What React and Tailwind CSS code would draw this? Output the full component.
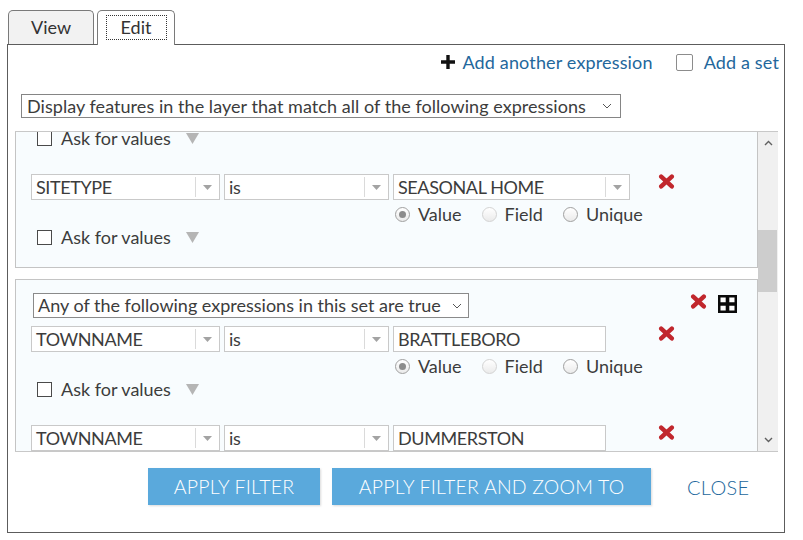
import React from "react";

function Caret() {
  return (
    <svg width="9" height="5" viewBox="0 0 9 5">
      <path d="M0 0h9L4.5 5z" fill="#a3a3a3" />
    </svg>
  );
}

function Chevron() {
  return (
    <svg width="10" height="6" viewBox="0 0 10 6">
      <path d="M1 1l4 4 4-4" fill="none" stroke="#555" strokeWidth="1" />
    </svg>
  );
}

function RedX() {
  return (
    <svg width="17" height="15" viewBox="0 0 17 15" className="shrink-0">
      <path d="M3.2 2.6L13.8 12.4M13.8 2.6L3.2 12.4" stroke="#c1272d" strokeWidth="4.4" strokeLinecap="round" />
    </svg>
  );
}

function PlusBox() {
  return (
    <svg width="19" height="18" viewBox="0 0 19 18" className="shrink-0">
      <rect x="1.25" y="1.25" width="16.5" height="15.5" fill="#fff" stroke="#0a0a0a" strokeWidth="2.5" />
      <path d="M9.5 1v16M1 9h17" stroke="#0a0a0a" strokeWidth="3.6" />
    </svg>
  );
}

function Sel({ w, text }) {
  return (
    <div className={`flex h-[26px] border border-[#c9c9c9] bg-white ${w}`}>
      <div className="flex flex-1 items-center overflow-hidden whitespace-nowrap pl-[4px] text-[18px] tracking-[-0.4px] text-[#3c3c3c]">
        {text}
      </div>
      <div className="my-[2px] w-px bg-[#dadada]" />
      <div className="flex w-[23px] items-center justify-center">
        <Caret />
      </div>
    </div>
  );
}

function Input({ text }) {
  return (
    <div className="flex h-[26px] w-[213px] items-center border border-[#c9c9c9] bg-white pl-[4px] text-[18px] tracking-[-0.4px] text-[#3c3c3c]">
      {text}
    </div>
  );
}

function Radio({ checked, label, light }) {
  return (
    <div className="flex items-center">
      <div
        className={`flex h-[15px] w-[15px] items-center justify-center rounded-full border bg-gradient-to-b from-white to-[#ebebeb] ${
          light ? "border-[#d3d3d3]" : "border-[#a0a0a0]"
        }`}
      >
        {checked && <div className="h-[7px] w-[7px] rounded-full bg-[#8c8c8c]" />}
      </div>
      <span className="ml-[8px] text-[18px] text-[#3c3c3c]">{label}</span>
    </div>
  );
}

function Expression({ field, value, input, first }) {
  return (
    <div className={first ? "" : "mt-[25px]"}>
      <div className="flex h-[26px] items-start gap-[4px] pl-[15px]">
        <Sel w="w-[189px]" text={field} />
        <Sel w="w-[165px]" text="is" />
        <div className="w-[237px]">
          {input ? <Input text={value} /> : <Sel w="w-[237px]" text={value} />}
        </div>
        <div className="ml-[24px]">
          <RedX />
        </div>
      </div>
      <div className="mt-[2px] flex h-[24px] items-center gap-[20px] pl-[379px]">
        <Radio checked label="Value" />
        <Radio light label="Field" />
        <Radio label="Unique" />
      </div>
      <div className="flex h-[22px] items-center pl-[21px]">
        <div className="h-[15px] w-[15px] border border-[#4a4a4a] bg-white" />
        <span className="ml-[9px] text-[18px] text-[#3c3c3c]">Ask for values</span>
        <svg className="ml-[15px]" width="13" height="11" viewBox="0 0 13 11">
          <path d="M0 0h13L6.5 11z" fill="#b5b5b5" />
        </svg>
      </div>
    </div>
  );
}

function SetBox({ children, extra }) {
  return (
    <div className={`border border-[#c4c4c4] bg-[#f8fcfe] pb-[19px] ${extra}`}>
      <div className="mt-[13px] flex items-start pl-[17px]">
        <div className="flex h-[25px] w-[436px] items-center justify-between border border-[#8a8a8a] bg-white pl-[4px] pr-[6px] text-[18px] text-[#3c3c3c]">
          <span>Any of the following expressions in this set are true</span>
          <Chevron />
        </div>
        <div className="ml-[221px] mt-px">
          <RedX />
        </div>
        <div className="ml-[11px] mt-[2px]">
          <PlusBox />
        </div>
      </div>
      <div className="mt-[8px]">{children}</div>
    </div>
  );
}

export default function App() {
  return (
    <div className="h-[540px] w-[803px] overflow-hidden bg-white pl-[7px] pt-[10px] text-[#3c3c3c] [font-family:Lato,'Open_Sans',sans-serif]">
      <div className="ml-px flex items-end">
        <div className="flex h-[34px] w-[86px] items-center justify-center rounded-t-[5px] border border-b-0 border-[#7a7a7a] bg-[#f2f2f2] text-[18px] text-[#333]">
          View
        </div>
        <div className="relative z-10 -mb-px ml-[3px] flex h-[35px] w-[78px] items-center justify-center rounded-t-[5px] border border-b-0 border-[#7a7a7a] bg-white">
          <div className="mb-[2px] flex h-[25px] w-[61px] items-center justify-center border border-dotted border-[#333] text-[18px] text-[#333]">
            Edit
          </div>
        </div>
      </div>
      <div className="flex h-[489px] w-[778px] flex-col border border-[#5c5c5c]">
        <div className="mt-[5px] flex h-[24px] items-center justify-end pr-[5px] text-[18px] tracking-[0.15px] text-[#23679c]">
          <svg width="14" height="14" viewBox="0 0 14 14">
            <path d="M7 0v14M0 7h14" stroke="#111" strokeWidth="3.4" />
          </svg>
          <span className="ml-[7px]">Add another expression</span>
          <div className="ml-[23px] h-[17px] w-[17px] rounded-[2px] border border-[#8c8c8c] bg-white" />
          <span className="ml-[11px]">Add a set</span>
        </div>
        <div className="ml-[13px] mt-[20px] flex h-[24px] w-[600px] items-center justify-between border border-[#858585] bg-white pl-[5px] pr-[8px] text-[18px] tracking-[0.05px] text-[#3c3c3c]">
          <span>Display features in the layer that match all of the following expressions</span>
          <Chevron />
        </div>
        <div className="ml-[7px] mt-[13px] flex h-[321px] w-[763px] border-y border-[#c8c8c8]">
          <div className="flex-1 overflow-hidden">
            <div className="-mt-[104px]">
              <SetBox extra="">
                <Expression first field="SITETYPE" value="RESIDENTIAL" />
                <Expression field="SITETYPE" value="SEASONAL HOME" />
              </SetBox>
              <SetBox extra="mt-[11px]">
                <Expression first input field="TOWNNAME" value="BRATTLEBORO" />
                <Expression input field="TOWNNAME" value="DUMMERSTON" />
              </SetBox>
            </div>
          </div>
          <div className="flex w-[20px] flex-col bg-[#f0f0f0]">
            <div className="flex h-[22px] items-center justify-center">
              <svg width="9" height="6" viewBox="0 0 9 6">
                <path d="M1 5l3.5-3.5L8 5" fill="none" stroke="#606060" strokeWidth="1.4" />
              </svg>
            </div>
            <div className="mt-[76px] h-[62px] w-[19px] bg-[#cdcdcd]" />
            <div className="flex-1" />
            <div className="flex h-[22px] items-center justify-center">
              <svg width="9" height="6" viewBox="0 0 9 6">
                <path d="M1 1l3.5 3.5L8 1" fill="none" stroke="#606060" strokeWidth="1.4" />
              </svg>
            </div>
          </div>
        </div>
        <div className="ml-[140px] mt-[16px] flex items-center">
          <button className="h-[37px] w-[172px] bg-[#5aa9dc] text-[19.5px] font-light tracking-[0.2px] text-white shadow-[1px_1px_2px_rgba(0,0,0,0.15)]">
            APPLY FILTER
          </button>
          <button className="ml-[12px] h-[37px] w-[319px] bg-[#5aa9dc] text-[19.5px] font-light tracking-[0.2px] text-white shadow-[1px_1px_2px_rgba(0,0,0,0.15)]">
            APPLY FILTER AND ZOOM TO
          </button>
          <span className="ml-[36px] text-[20px] font-light tracking-[0.3px] text-[#23679c]">CLOSE</span>
        </div>
      </div>
    </div>
  );
}
